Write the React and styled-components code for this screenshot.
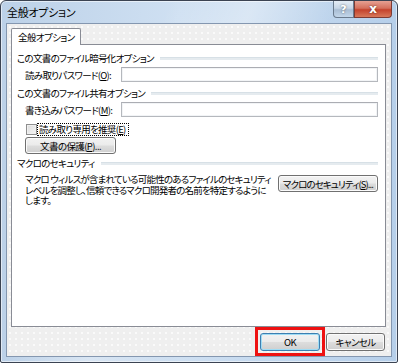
import React from "react";
import styled, { createGlobalStyle } from "styled-components";

const Global = createGlobalStyle`
  html, body { margin: 0; padding: 0; background: #ffffff; }
  body { font-family: "Noto Sans CJK JP", "Noto Sans", sans-serif; }
  * { box-sizing: border-box; }
`;

const jp = `"Noto Sans CJK JP", "Noto Sans", sans-serif`;

const Window = styled.div`
  width: 398px;
  height: 363px;
  border: 1px solid #3b4352;
  border-radius: 6px 6px 2px 2px;
  padding: 0 5px 5px 5px;
  display: flex;
  flex-direction: column;
  background:
    linear-gradient(115deg, rgba(255,255,255,0) 30%, rgba(255,255,255,0.35) 45%, rgba(255,255,255,0) 60%),
    linear-gradient(to right, #bcd1e8 0%, #cfe0f2 45%, #b6cfea 100%);
  box-shadow: inset 0 0 0 1px rgba(255,255,255,0.55);
`;

const TitleBar = styled.div`
  height: 22px;
  display: flex;
  align-items: flex-start;
  justify-content: space-between;
  padding-left: 1px;
`;

const Title = styled.div`
  font-family: ${jp};
  font-size: 11px;
  line-height: 22px;
  color: #000;
  font-feature-settings: "palt";
  letter-spacing: -0.3px;
  white-space: nowrap;
`;

const Caption = styled.div`
  display: flex;
`;

const CapBtn = styled.div`
  width: ${(p) => p.$w}px;
  height: 17px;
  display: flex;
  align-items: center;
  justify-content: center;
  font-family: "DejaVu Sans", sans-serif;
  font-weight: bold;
  font-size: ${(p) => (p.$close ? 12 : 11)}px;
  color: #fff;
  text-shadow: 0 0 2px rgba(0,0,0,0.6);
  border: 1px solid ${(p) => (p.$close ? "#7d3b34" : "#6a7a8d")};
  border-top: none;
  border-radius: ${(p) => (p.$close ? "0 0 4px 0" : "0 0 0 4px")};
  background: ${(p) =>
    p.$close
      ? "linear-gradient(#e6a193 0%, #d4705d 45%, #c4422c 55%, #d8785a 100%)"
      : "linear-gradient(#e4ecf5 0%, #c6d5e6 45%, #a9bdd4 55%, #c3d6ea 100%)"};
`;

const Client = styled.div`
  flex: 1;
  border: 1px solid #8497b0;
  background-color: #efefef;
  background-image: radial-gradient(circle, #fafafa 0.7px, transparent 1px);
  background-size: 6px 6px;
  padding: 4px 5px 0 4px;
  display: flex;
  flex-direction: column;
`;

const TabStrip = styled.div`
  display: flex;
  position: relative;
  z-index: 1;
`;

const Tab = styled.div`
  width: 70px;
  height: 17px;
  margin-bottom: -1px;
  border: 1px solid #898c95;
  border-bottom: none;
  border-radius: 2px 2px 0 0;
  background: #fff;
  font-family: ${jp};
  font-size: 9.5px;
  letter-spacing: -0.6px;
  line-height: 16px;
  padding-left: 6px;
  color: #000;
  font-feature-settings: "palt";
  white-space: nowrap;
`;

const Panel = styled.div`
  height: 283px;
  border: 1px solid #898c95;
  background: #fff;
  padding: 7px 7px 0 0;
  display: flex;
  flex-direction: column;
  font-family: ${jp};
  font-size: 9.5px;
  letter-spacing: -0.7px;
  color: #000;
  font-feature-settings: "palt";
`;

const GroupHeader = styled.div`
  display: flex;
  align-items: center;
  gap: 6px;
  height: 12px;
  line-height: 12px;
  padding-left: 5px;
  margin-top: ${(p) => p.$mt || 0}px;
  white-space: nowrap;
  &::after {
    content: "";
    flex: 1;
    height: 2px;
    background: #e5ebef;
    border-top: 1px solid #d7e0e6;
  }
`;

const FieldRow = styled.div`
  display: flex;
  align-items: center;
  padding-left: 13px;
  margin-top: ${(p) => p.$mt || 0}px;
`;

const Label = styled.div`
  width: 96px;
  flex-shrink: 0;
  white-space: nowrap;
  line-height: 12px;
`;

const TextBox = styled.div`
  flex: 1;
  height: 15px;
  border: 1px solid #b5b8bd;
  border-top-color: #abadb3;
  background: #fff;
  box-shadow: inset 0 0 0 1px #f2f4f6;
`;

const CheckRow = styled.div`
  display: flex;
  align-items: center;
  gap: 1px;
  padding-left: 14px;
  margin-top: 7px;
`;

const CheckBox = styled.div`
  width: 11px;
  height: 11px;
  border: 1px solid #8f8f8f;
  background: linear-gradient(135deg, #dcdcdc, #f6f6f6);
  box-shadow: inset 0 0 0 1px #f0f0f0;
`;

const FocusLabel = styled.div`
  outline: 1px dotted #000;
  padding: 0 2px 0 1px;
  line-height: 11px;
  white-space: nowrap;
`;

const Button = styled.div`
  width: ${(p) => p.$w}px;
  height: ${(p) => p.$h || 17}px;
  display: flex;
  align-items: center;
  justify-content: center;
  font-family: ${jp};
  font-size: 9.5px;
  letter-spacing: ${(p) => (p.$tight ? -0.9 : -0.6)}px;
  color: #000;
  font-feature-settings: "palt";
  white-space: nowrap;
  border: 1px solid ${(p) => (p.$default ? "#3c7fb1" : "#707070")};
  border-radius: 3px;
  background: linear-gradient(#f2f2f2 0%, #ebebeb 48%, #dddddd 52%, #cfcfcf 100%);
  box-shadow: inset 0 0 0 1px ${(p) => (p.$default ? "#9fdcf5" : "#fbfbfb")};
  flex-shrink: 0;
  margin-top: ${(p) => p.$mt || 0}px;
`;

const ButtonRow = styled.div`
  display: flex;
  padding-left: 13px;
  margin-top: ${(p) => p.$mt || 0}px;
`;

const MacroRow = styled.div`
  display: flex;
  justify-content: space-between;
  align-items: flex-start;
  padding-left: 13px;
  margin-top: 3px;
`;

const Para = styled.div`
  line-height: 10.5px;
  white-space: nowrap;
  letter-spacing: -0.8px;
  padding-top: 2px;
`;

const Footer = styled.div`
  display: flex;
  justify-content: flex-end;
  align-items: flex-start;
  gap: 1px;
  padding-right: 1px;
`;

const Highlight = styled.div`
  border: 3px solid #ee1111;
  padding: 3px 2px 2px 2px;
`;

const FooterBtnWrap = styled.div`
  padding-top: 6px;
`;

export default function App() {
  return (
    <>
      <Global />
      <Window>
        <TitleBar>
          <Title>全般オプション</Title>
          <Caption>
            <CapBtn $w={21}>?</CapBtn>
            <CapBtn $w={38} $close>x</CapBtn>
          </Caption>
        </TitleBar>
        <Client>
          <TabStrip>
            <Tab>全般オプション</Tab>
          </TabStrip>
          <Panel>
            <GroupHeader>この文書のファイル暗号化オプション</GroupHeader>
            <FieldRow $mt={3}>
              <Label>読み取りパスワード(<u>O</u>):</Label>
              <TextBox />
            </FieldRow>
            <GroupHeader $mt={5}>この文書のファイル共有オプション</GroupHeader>
            <FieldRow $mt={3}>
              <Label>書き込みパスワード(<u>M</u>):</Label>
              <TextBox />
            </FieldRow>
            <CheckRow>
              <CheckBox />
              <FocusLabel>読み取り専用を推奨(<u>E</u>)</FocusLabel>
            </CheckRow>
            <ButtonRow $mt={2}>
              <Button $w={91}>文書の保護(<u>P</u>)...</Button>
            </ButtonRow>
            <GroupHeader $mt={3}>マクロのセキュリティ</GroupHeader>
            <MacroRow>
              <Para>
                マクロ ウィルスが含まれている可能性のあるファイルのセキュリティ
                <br />
                レベルを調整し、信頼できるマクロ開発者の名前を特定するように
                <br />
                します。
              </Para>
              <Button $w={100} $mt={3} $tight>
                マクロのセキュリティ(<u>S</u>)...
              </Button>
            </MacroRow>
          </Panel>
          <Footer>
            <Highlight>
              <Button $w={60} $h={18} $default>
                OK
              </Button>
            </Highlight>
            <FooterBtnWrap>
              <Button $w={59} $h={18}>キャンセル</Button>
            </FooterBtnWrap>
          </Footer>
        </Client>
      </Window>
    </>
  );
}
